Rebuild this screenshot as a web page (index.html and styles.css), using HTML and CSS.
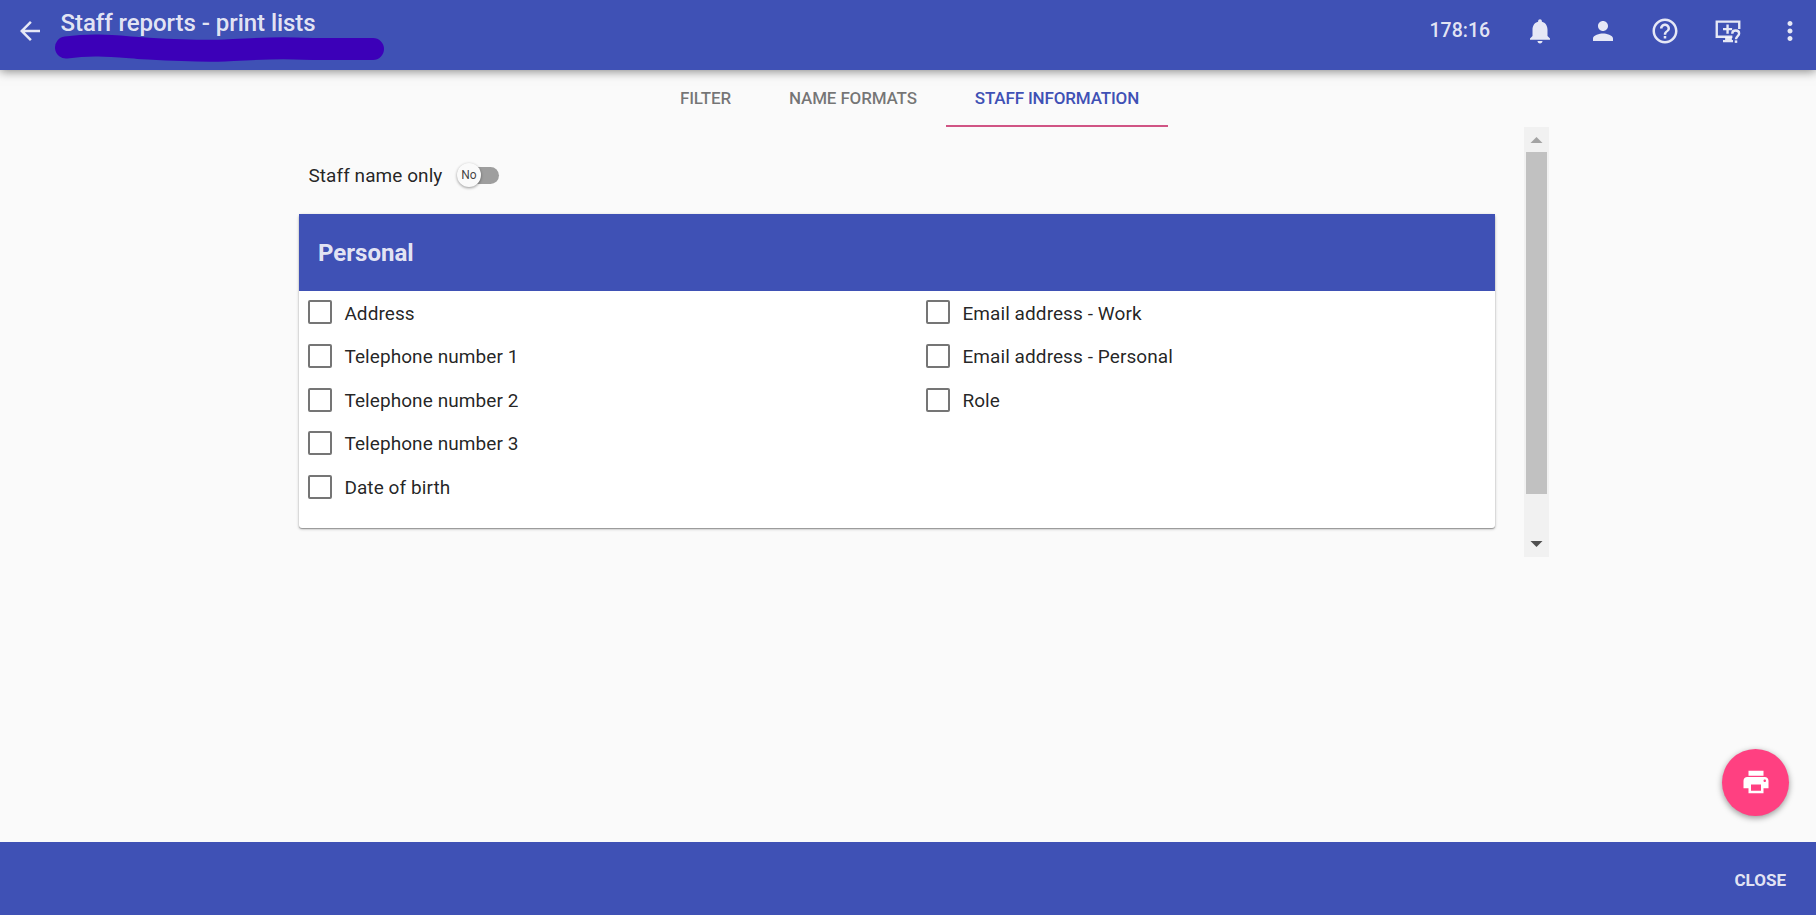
FILE: index.html
```html
<!DOCTYPE html>
<html lang="en">
<head>
<meta charset="utf-8">
<title>Staff reports - print lists</title>
<link rel="stylesheet" href="styles.css">
</head>
<body>
<div class="app">
  <header class="toolbar">
    <svg class="icon back" viewBox="0 0 24 24"><path d="M20 11H7.830l5.590-5.590L12 4l-8 8 8 8 1.410-1.410L7.830 13H20v-2z"/></svg>
    <div class="titles">
      <h1 class="title">Staff reports - print lists</h1>
      <svg class="scribble" viewBox="0 0 330 29"><path d="M11 12.500C38 9 56 11 83 13C118 15 138 16.500 170 15.500C195 14.500 215 12.500 240 13.500C265 14.500 290 14 318 14"/></svg>
    </div>
    <div class="actions">
      <span class="timer">178:16</span>
      <svg class="icon" viewBox="0 0 24 24"><path d="M12 22c1.100 0 2-.9 2-2h-4c0 1.100.89 2 2 2zm6-6v-5c0-3.070-1.640-5.640-4.500-6.320V4c0-.83-.67-1.500-1.500-1.500s-1.500.67-1.500 1.500v.68C7.630 5.360 6 7.920 6 11v5l-2 2v1h16v-1l-2-2z"/></svg>
      <svg class="icon" viewBox="0 0 24 24"><path d="M12 12c2.210 0 4-1.790 4-4s-1.790-4-4-4-4 1.790-4 4 1.790 4 4 4zm0 2c-2.670 0-8 1.340-8 4v2h16v-2c0-2.660-5.330-4-8-4z"/></svg>
      <svg class="icon" viewBox="0 0 24 24"><path d="M11 18h2v-2h-2v2zm1-16C6.480 2 2 6.480 2 12s4.480 10 10 10 10-4.480 10-10S17.520 2 12 2zm0 18c-4.410 0-8-3.590-8-8s3.590-8 8-8 8 3.590 8 8-3.590 8-8 8zm0-14c-2.210 0-4 1.790-4 4h2c0-1.100.9-2 2-2s2 .9 2 2c0 2-3 1.750-3 5h2c0-2.250 3-2.500 3-5 0-2.210-1.790-4-4-4z"/></svg>
      <svg class="icon" viewBox="0 0 24 24"><path class="mark" d="M21 10.300V4.500H3V16.600H15.500"/><path d="M9.700 17h5.400v2.200H16V21H8v-1.800h1.700z"/><path d="M10.700 6.800h1.900v2.700h2.700v1.900h-2.700v2.700h-1.900v-2.700H8V9.500h2.700z"/><path class="mark" d="M15.400 14.200c0-1.600 1.100-2.600 2.700-2.600s2.800 1 2.800 2.400c0 2-2.500 2.100-2.500 4.500"/><path d="M17.400 19.500h2v2h-2z"/></svg>
      <svg class="icon" viewBox="0 0 24 24"><path d="M12 8c1.100 0 2-.9 2-2s-.9-2-2-2-2 .9-2 2 .9 2 2 2zm0 2c-1.100 0-2 .9-2 2s.9 2 2 2 2-.9 2-2-.9-2-2-2zm0 6c-1.100 0-2 .9-2 2s.9 2 2 2 2-.9 2-2-.9-2-2-2z"/></svg>
    </div>
  </header>

  <main class="content">
    <nav class="tabs">
      <div class="tab">FILTER</div>
      <div class="tab">NAME FORMATS</div>
      <div class="tab tab-active">STAFF INFORMATION</div>
    </nav>
    <div class="pane">
      <div class="form">
        <div class="switch-row">
          <span class="switch-label">Staff name only</span>
          <span class="switch"><span class="knob">No</span></span>
        </div>
        <section class="card">
          <h2 class="card-head">Personal</h2>
          <div class="fields">
            <div class="column">
              <label class="field"><span class="box"></span>Address</label>
              <label class="field"><span class="box"></span>Telephone number 1</label>
              <label class="field"><span class="box"></span>Telephone number 2</label>
              <label class="field"><span class="box"></span>Telephone number 3</label>
              <label class="field"><span class="box"></span>Date of birth</label>
            </div>
            <div class="column">
              <label class="field"><span class="box"></span>Email address - Work</label>
              <label class="field"><span class="box"></span>Email address - Personal</label>
              <label class="field"><span class="box"></span>Role</label>
            </div>
          </div>
        </section>
      </div>
      <div class="scrollbar">
        <svg class="arrow arrow-up" viewBox="0 0 25 25"><path d="M6.500 16L12.500 10L18.500 16z"/></svg>
        <div class="thumb"></div>
        <svg class="arrow arrow-down" viewBox="0 0 25 25"><path d="M6.500 9L12.500 15L18.500 9z"/></svg>
      </div>
    </div>
  </main>

  <div class="fab">
    <svg class="fab-icon" viewBox="0 0 24 24"><path d="M19 8H5c-1.660 0-3 1.340-3 3v6h4v4h12v-4h4v-6c0-1.660-1.340-3-3-3zm-3 11H8v-5h8v5zm3-7c-.55 0-1-.45-1-1s.45-1 1-1 1 .45 1 1-.45 1-1 1zm-1-9H6v4h12V3z"/></svg>
  </div>

  <footer class="footer"><span class="close">CLOSE</span></footer>
</div>
</body>
</html>
```
FILE: styles.css
```css
* { box-sizing: border-box; }
body {
  margin: 0;
  background: #fafafa;
  color: rgba(0, 0, 0, .87);
  font-family: Roboto, "Liberation Sans", sans-serif;
}
.app {
  position: relative;
  display: flex;
  flex-direction: column;
  height: 915px;
  overflow: hidden;
}
.toolbar {
  position: relative;
  display: flex;
  align-items: flex-start;
  height: 70px;
  padding: 0 11px 0 15px;
  background: #3f51b5;
  color: rgba(255, 255, 255, .87);
  box-shadow: 0 1px 10px rgba(0, 0, 0, .5);
}
.icon {
  flex: none;
  width: 30px;
  height: 30px;
  fill: currentColor;
}
.mark {
  fill: none;
  stroke: currentColor;
  stroke-width: 1.9;
}
.icon .mark { fill: none; }
.back { margin-top: 15.500px; }
.titles {
  display: flex;
  flex-direction: column;
  width: 340px;
  padding-left: 10px;
}
.title {
  margin: 8px 0 0 5.500px;
  font-size: 24px;
  font-weight: 500;
  line-height: 30px;
  letter-spacing: -.05px;
  white-space: nowrap;
}
.scribble {
  width: 330px;
  height: 29px;
  margin-top: -3.300px;
  overflow: visible;
}
.scribble path {
  fill: none;
  stroke: #3c00b8;
  stroke-width: 22;
  stroke-linecap: round;
}
.actions {
  display: flex;
  align-items: center;
  gap: 32.400px;
  height: 61px;
  margin-left: auto;
}
.timer {
  margin-right: 3px;
  font-size: 19.500px;
  font-weight: 500;
}
.content {
  display: flex;
  flex: 1;
  flex-direction: column;
}
.tabs {
  display: flex;
  height: 57px;
  margin-left: 651px;
}
.tab {
  padding: 0 29px;
  border-bottom: 2px solid transparent;
  color: rgba(0, 0, 0, .54);
  font-size: 17px;
  font-weight: 500;
  line-height: 56px;
  letter-spacing: -.16px;
  white-space: nowrap;
}
.tab-active {
  border-color: #d05484;
  color: #3f51b5;
}
.pane {
  display: flex;
  justify-content: space-between;
  width: 1250px;
  height: 430px;
  margin-left: 299px;
}
.form { width: 1196px; }
.switch-row {
  display: flex;
  align-items: center;
  height: 87px;
  padding: 10px 0 0 9.500px;
}
.switch-label {
  width: 151.500px;
  font-size: 19px;
  letter-spacing: .06px;
}
.switch {
  width: 39px;
  height: 17px;
  border-radius: 9px;
  background: #9e9e9e;
}
.knob {
  display: flex;
  align-items: center;
  justify-content: center;
  width: 24px;
  height: 24px;
  margin: -4px 0 0 -3px;
  border-radius: 50%;
  background: #fafafa;
  box-shadow: 0 1px 3px rgba(0, 0, 0, .4);
  color: rgba(0, 0, 0, .75);
  font-size: 12px;
}
.card {
  height: 314px;
  border-radius: 3px;
  background: #fff;
  box-shadow: 0 1px 3px rgba(0, 0, 0, .3), 0 1px 1px rgba(0, 0, 0, .25);
}
.card-head {
  height: 77px;
  margin: 0;
  padding: 1px 0 0 19px;
  background: #3f51b5;
  color: rgba(255, 255, 255, .87);
  font-size: 24px;
  font-weight: 700;
  line-height: 77px;
}
.fields {
  display: grid;
  grid-template-columns: 618px 1fr;
  padding: .5px 0 0 9px;
}
.field {
  display: flex;
  align-items: center;
  gap: 12.400px;
  height: 43.550px;
  font-size: 19px;
  letter-spacing: .08px;
}
.box {
  width: 24px;
  height: 24px;
  margin-top: -1.600px;
  border: 2px solid #757575;
  border-radius: 2px;
}
.scrollbar {
  display: flex;
  flex-direction: column;
  width: 25px;
  background: #f1f1f1;
}
.arrow {
  width: 25px;
  height: 25px;
}
.arrow-up { fill: #a3a3a3; }
.arrow-down {
  margin-top: auto;
  fill: #505050;
}
.thumb {
  height: 342px;
  margin: 0 2px;
  background: #c1c1c1;
}
.fab {
  position: absolute;
  right: 27px;
  bottom: 99px;
  display: flex;
  align-items: center;
  justify-content: center;
  width: 67px;
  height: 67px;
  padding-bottom: 2px;
  border-radius: 50%;
  background: #ff4081;
  box-shadow: 0 2px 6px rgba(0, 0, 0, .4);
}
.fab-icon {
  width: 30px;
  height: 30px;
  fill: #fff;
}
.footer {
  display: flex;
  align-items: center;
  justify-content: flex-end;
  height: 73px;
  padding: 3px 30px 0 0;
  background: #3f51b5;
}
.close {
  color: rgba(255, 255, 255, .87);
  font-size: 17px;
  font-weight: 700;
}
```
